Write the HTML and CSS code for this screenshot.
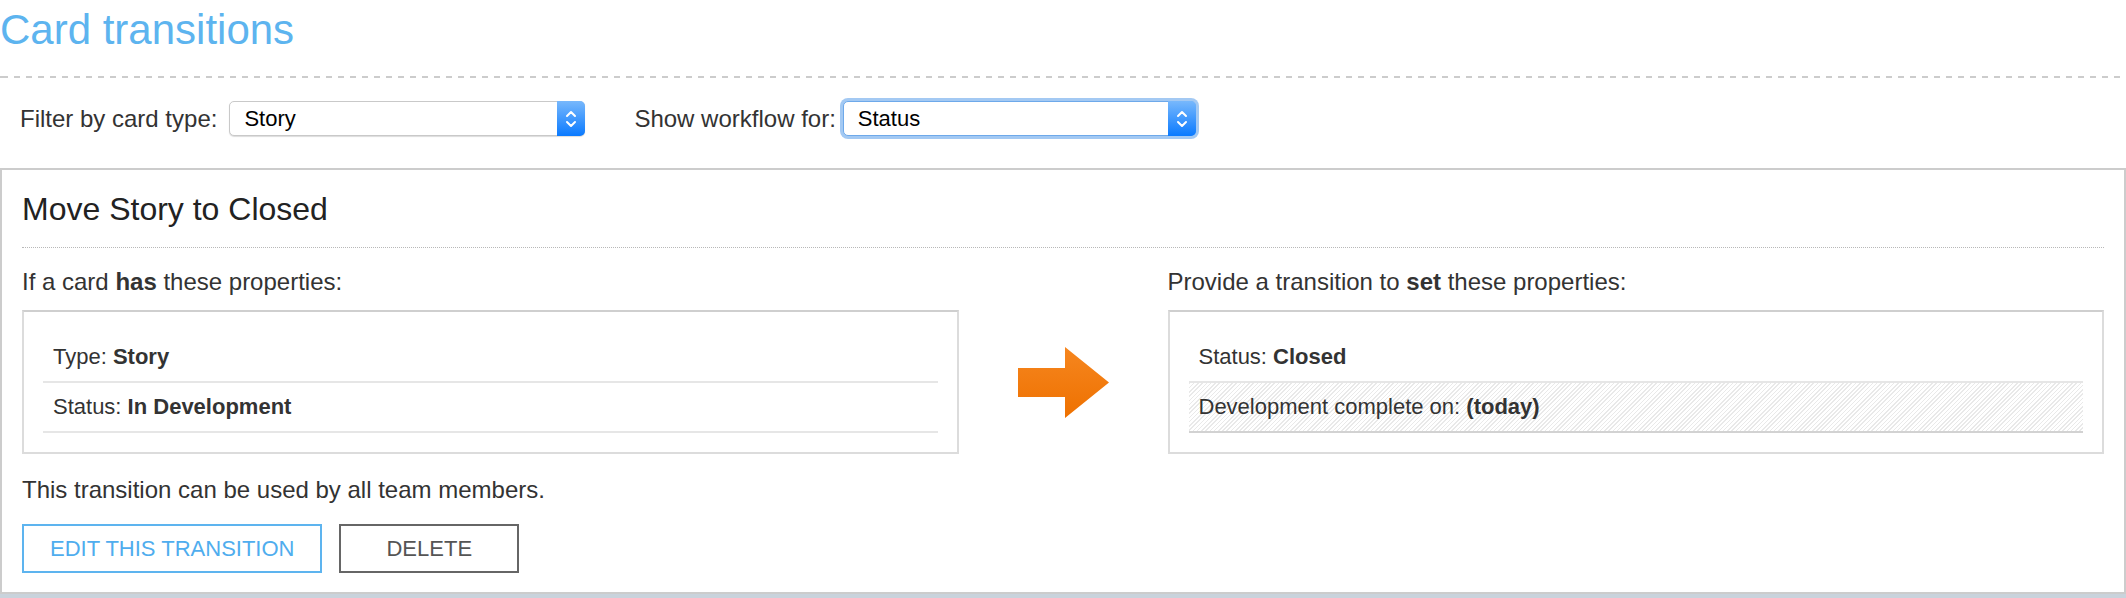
FILE: index.html
```html
<!DOCTYPE html>
<html lang="en">
<head>
<meta charset="utf-8">
<title>Card transitions</title>
<link rel="stylesheet" href="styles.css">
</head>
<body>
  <h1 class="page-title">Card transitions</h1>
  <div class="title-rule"></div>

  <div class="filters">
    <span class="filter-label">Filter by card type:</span>
    <div class="select">
      <span class="select-value">Story</span>
      <span class="select-stepper">
        <svg width="12" height="22" viewBox="0 0 12 22"><polyline points="2,8 6,4 10,8" fill="none" stroke="#fff" stroke-width="2" stroke-linecap="round" stroke-linejoin="round"/><polyline points="2,14 6,18 10,14" fill="none" stroke="#fff" stroke-width="2" stroke-linecap="round" stroke-linejoin="round"/></svg>
      </span>
    </div>
    <span class="filter-label filter-label--second">Show workflow for:</span>
    <div class="select select--focused">
      <span class="select-value">Status</span>
      <span class="select-stepper">
        <svg width="12" height="22" viewBox="0 0 12 22"><polyline points="2,8 6,4 10,8" fill="none" stroke="#fff" stroke-width="2" stroke-linecap="round" stroke-linejoin="round"/><polyline points="2,14 6,18 10,14" fill="none" stroke="#fff" stroke-width="2" stroke-linecap="round" stroke-linejoin="round"/></svg>
      </span>
    </div>
  </div>

  <section class="card">
    <h2 class="card-title">Move Story to Closed</h2>
    <div class="card-rule"></div>

    <div class="transition-grid">
      <p class="col-heading col-heading--left">If a card <b>has</b> these properties:</p>
      <p class="col-heading col-heading--right">Provide a transition to <b>set</b> these properties:</p>

      <div class="prop-box prop-box--left">
        <div class="prop-row">Type: <b>Story</b></div>
        <div class="prop-row">Status: <b>In Development</b></div>
      </div>

      <div class="arrow">
        <svg width="91" height="71" viewBox="0 0 91 71">
          <defs>
            <linearGradient id="arrowFill" x1="0" y1="0" x2="0" y2="1">
              <stop offset="0" stop-color="#f6861f"/>
              <stop offset="1" stop-color="#ee7100"/>
            </linearGradient>
          </defs>
          <polygon points="0,21 47,21 47,0 91,35.5 47,71 47,50 0,50" fill="url(#arrowFill)"/>
        </svg>
      </div>

      <div class="prop-box prop-box--right">
        <div class="prop-row">Status: <b>Closed</b></div>
        <div class="prop-row prop-row--hatched">Development complete on: <b>(today)</b></div>
      </div>
    </div>

    <p class="note">This transition can be used by all team members.</p>

    <div class="actions">
      <button class="btn btn-edit">EDIT THIS TRANSITION</button>
      <button class="btn btn-delete">DELETE</button>
    </div>
  </section>
  <div class="footer-strip"></div>
</body>
</html>
```

FILE: styles.css
```css
* {
  box-sizing: border-box;
}

body {
  margin: 0;
  font-family: "Liberation Sans", Arial, Helvetica, sans-serif;
  color: #333;
  background: #fff;
}

.page-title {
  margin: 0;
  height: 60px;
  font-size: 42px;
  font-weight: normal;
  line-height: 60px;
  color: #5db4ef;
}

.title-rule {
  margin-top: 16px;
  height: 2px;
  background: repeating-linear-gradient(90deg, #cccccc 0 6px, transparent 6px 12px);
  background-position: 2px 0;
}

.filters {
  display: flex;
  align-items: center;
  height: 35px;
  margin-top: 23px;
  padding-left: 20px;
}

.filter-label {
  font-size: 24px;
  color: #333;
  margin-right: 12px;
}

.filter-label--second {
  margin-left: 49px;
  margin-right: 7px;
}

.select {
  display: flex;
  align-items: center;
  width: 356px;
  height: 35px;
  border: 1px solid #c9c9c9;
  border-radius: 5px;
  background: #fff;
  box-shadow: 0 1px 1px rgba(0, 0, 0, 0.14);
  font-size: 22px;
  color: #000;
}

.select-value {
  flex: 1;
  padding-left: 14px;
}

.select-stepper {
  align-self: stretch;
  width: 28px;
  margin: -1px -1px -1px 0;
  border-radius: 0 5px 5px 0;
  background: linear-gradient(#78b8fc, #0a7aff);
  display: flex;
  align-items: center;
  justify-content: center;
}

.select--focused {
  width: 353px;
  border-color: #6ea9ea;
  box-shadow: 0 0 0 3px #a3c9f3;
}

.card {
  margin-top: 32px;
  border: 2px solid #cccccc;
  padding: 20px 20px 19px;
}

.card-title {
  margin: 0;
  font-size: 32px;
  font-weight: normal;
  line-height: 38px;
  color: #222;
}

.card-rule {
  margin-top: 19px;
  border-top: 1px dotted #b8b8b8;
}

.transition-grid {
  margin-top: 19px;
  display: grid;
  grid-template-columns: 1fr 209px 1fr;
  grid-template-areas:
    "lh . rh"
    "lb ar rb";
  row-gap: 13px;
}

.col-heading {
  margin: 0;
  font-size: 24px;
  line-height: 30px;
  color: #333;
}

.col-heading--left { grid-area: lh; }
.col-heading--right { grid-area: rh; }

.prop-box {
  border: 2px solid #dcdcdc;
  border-top-color: #cfcfcf;
  padding: 21px 19px 19px;
}

.prop-box--left { grid-area: lb; }
.prop-box--right { grid-area: rb; }

.prop-row {
  font-size: 22px;
  line-height: 48px;
  padding-left: 10px;
  border-bottom: 2px solid #e6e6e6;
  color: #333;
}

.prop-row--hatched {
  background: repeating-linear-gradient(-45deg, #ffffff 0 1.9px, #e9e9e9 1.9px 3px);
  border-bottom-color: #d2d2d2;
}

.arrow {
  grid-area: ar;
  display: flex;
  align-items: center;
  justify-content: center;
}

.note {
  margin: 21px 0 0;
  font-size: 24px;
  line-height: 30px;
  color: #333;
}

.actions {
  margin-top: 19px;
  display: flex;
  gap: 17px;
}

.btn {
  height: 49px;
  border: 2px solid;
  background: #fff;
  font-family: inherit;
  font-size: 22px;
  padding: 0 26px;
  cursor: pointer;
}

.btn-edit {
  border-color: #5db4ef;
  color: #4fadee;
}

.btn-delete {
  border-color: #666;
  color: #555;
  padding: 0 45px;
}

.footer-strip {
  height: 4px;
  background: #c9d3dc;
}
```
